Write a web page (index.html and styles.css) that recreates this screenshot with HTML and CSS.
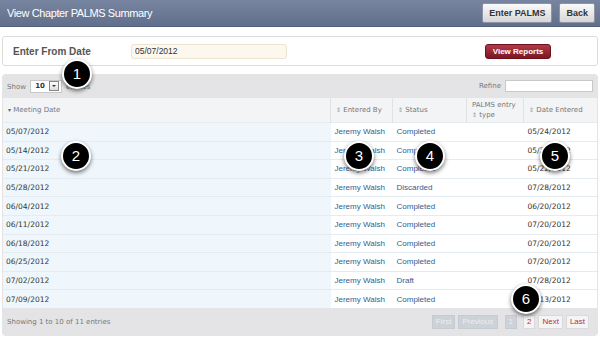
FILE: index.html
```html
<!DOCTYPE html>
<html lang="en">
<head>
    <meta charset="UTF-8">
    <title>View Chapter PALMS Summary</title>
    <link rel="stylesheet" href="styles.css">
</head>
<body>
    <div class="topbar">
        <h1>View Chapter PALMS Summary</h1>
        <div class="top-actions">
            <button class="btn">Enter PALMS</button>
            <button class="btn">Back</button>
        </div>
    </div>

    <div class="page">
        <div class="filter">
            <label class="filter-label">Enter From Date</label>
            <input type="text" class="date-input" value="05/07/2012">
            <button class="btn-red">View Reports</button>
        </div>

        <div class="grid">
            <div class="grid-top">
                <div class="show">Show <span class="select">10 <span class="select-arrow"></span></span> entries</div>
                <div class="refine">Refine <input type="text" class="refine-input"></div>
            </div>
            <table>
                <thead>
                    <tr>
                        <th class="c1"><span class="down">&#9662;</span> Meeting Date</th>
                        <th class="c2"><span class="sort">&#8661;</span> Entered By</th>
                        <th class="c3"><span class="sort">&#8661;</span> Status</th>
                        <th class="c4">PALMS entry<br><span class="sort">&#8661;</span> type</th>
                        <th class="c5"><span class="sort">&#8661;</span> Date Entered</th>
                    </tr>
                </thead>
                <tbody>
                    <tr><td class="c1">05/07/2012</td><td class="link">Jeremy Walsh</td><td class="link">Completed</td><td></td><td>05/24/2012</td></tr>
                    <tr><td class="c1">05/14/2012</td><td class="link">Jeremy Walsh</td><td class="link">Completed</td><td></td><td>05/24/2012</td></tr>
                    <tr><td class="c1">05/21/2012</td><td class="link">Jeremy Walsh</td><td class="link">Completed</td><td></td><td>05/22/2012</td></tr>
                    <tr><td class="c1">05/28/2012</td><td class="link">Jeremy Walsh</td><td class="link">Discarded</td><td></td><td>07/28/2012</td></tr>
                    <tr><td class="c1">06/04/2012</td><td class="link">Jeremy Walsh</td><td class="link">Completed</td><td></td><td>06/20/2012</td></tr>
                    <tr><td class="c1">06/11/2012</td><td class="link">Jeremy Walsh</td><td class="link">Completed</td><td></td><td>07/20/2012</td></tr>
                    <tr><td class="c1">06/18/2012</td><td class="link">Jeremy Walsh</td><td class="link">Completed</td><td></td><td>07/20/2012</td></tr>
                    <tr><td class="c1">06/25/2012</td><td class="link">Jeremy Walsh</td><td class="link">Completed</td><td></td><td>07/20/2012</td></tr>
                    <tr><td class="c1">07/02/2012</td><td class="link">Jeremy Walsh</td><td class="link">Draft</td><td></td><td>07/28/2012</td></tr>
                    <tr><td class="c1">07/09/2012</td><td class="link">Jeremy Walsh</td><td class="link">Completed</td><td></td><td>07/13/2012</td></tr>
                </tbody>
            </table>
            <div class="grid-bottom">
                <div class="info">Showing 1 to 10 of 11 entries</div>
                <div class="pager">
                    <span class="pg off">First</span>
                    <span class="pg off">Previous</span>
                    <span class="pg cur">1</span>
                    <span class="pg">2</span>
                    <span class="pg">Next</span>
                    <span class="pg">Last</span>
                </div>
            </div>
        </div>
    </div>

    <span class="badge" style="left:62px; top:59px;">1</span>
    <span class="badge" style="left:61px; top:141px;">2</span>
    <span class="badge" style="left:344px; top:141px;">3</span>
    <span class="badge" style="left:415px; top:141px;">4</span>
    <span class="badge" style="left:540px; top:141px;">5</span>
    <span class="badge" style="left:511px; top:284px;">6</span>
</body>
</html>
```

FILE: styles.css
```css
body { margin: 0; background: #fff; font-family: "Liberation Sans", Arial, sans-serif; width: 600px; height: 338px; overflow: hidden; position: relative; }

.topbar { height: 26px; display: flex; align-items: center; justify-content: space-between; padding: 0 5px 0 7px; background: linear-gradient(#7885a0, #606f8c); border-bottom: 1px solid #55627c; }
.topbar h1 { margin: 0; font-size: 11px; font-weight: normal; color: #fff; letter-spacing: -0.4px; }
.top-actions { display: flex; gap: 7px; }
.btn { height: 20px; padding: 0 6px; font-family: "Liberation Sans", Arial, sans-serif; font-size: 9px; font-weight: bold; color: #333; background: linear-gradient(#fafafa, #d6d6d6); border: 1px solid #8d95a5; border-radius: 2px; }

.page { padding: 0 2px; }
.filter { margin-top: 9px; height: 28px; border: 1px solid #dcdcdc; border-radius: 3px; display: flex; align-items: center; padding: 0 0 0 10px; }
.filter-label { width: 118px; font-size: 10px; font-weight: bold; color: #555; }
.date-input { width: 148px; height: 13px; padding: 0 3px; font-family: "Liberation Sans", Arial, sans-serif; font-size: 8.5px; color: #333; background: #fcf8ee; border: 1px solid #ece3d0; border-radius: 3px; }
.btn-red { margin-left: 198px; width: 66px; height: 15px; padding: 0; font-family: "Liberation Sans", Arial, sans-serif; font-size: 8px; font-weight: bold; color: #fff; background: linear-gradient(#b23a48, #7c1723); border: 1px solid #6c1019; border-radius: 3px; }

.grid { margin-top: 8px; background: #e4e4e7; border-radius: 4px; padding: 0 1px; }
.grid-top { height: 24px; display: flex; align-items: center; justify-content: space-between; padding: 0 4px 0 4px; font-family: "DejaVu Sans", Verdana, sans-serif; font-size: 7px; color: #777; }
.select { display: inline-flex; align-items: center; gap: 4px; height: 11px; padding: 0 2px 0 4px; margin: 0 2px; background: #fff; border: 1px solid #c8c8c8; color: #333; font-weight: bold; }
.select-arrow { width: 8px; height: 8px; border: 1px solid #888; background: linear-gradient(#fff, #ddd); position: relative; }
.select-arrow::after { content: ""; position: absolute; left: 2px; top: 3px; border-left: 2px solid transparent; border-right: 2px solid transparent; border-top: 2px solid #333; }
.refine { display: flex; align-items: center; gap: 4px; }
.refine-input { width: 86px; height: 10px; border: 1px solid #c8c8c8; padding: 0; }

table { width: 100%; border-collapse: collapse; table-layout: fixed; }
th { height: 24px; padding: 0 5px; text-align: left; font-family: "DejaVu Sans", Verdana, sans-serif; font-size: 7px; font-weight: normal; color: #777; background: #f3f4f6; border-left: 1px solid #e2e2e4; line-height: 9px; }
th.c1 { width: 317px; border-left: none; }
th.c2 { width: 51px; }
th.c3 { width: 63px; }
th.c4 { width: 46px; }
.sort { font-size: 6px; color: #999; }
.down { font-size: 6px; color: #666; }
td { height: 17.6px; padding: 0 4px; font-family: "DejaVu Sans", Verdana, sans-serif; font-size: 7.5px; color: #333; background: #fff; border-top: 1px solid #e4ecf2; white-space: nowrap; }
td.c1 { background: #eff7fd; padding-left: 3px; }
td.link { font-family: "Liberation Sans", Arial, sans-serif; font-size: 8px; color: #2d6193; }

.grid-bottom { height: 28px; display: flex; align-items: center; justify-content: space-between; padding: 0 8px 0 4px; font-family: "DejaVu Sans", Verdana, sans-serif; font-size: 7px; color: #777; }
.pager { display: flex; gap: 3px; font-family: "Liberation Sans", Arial, sans-serif; }
.pg { height: 12px; line-height: 12px; padding: 0 3px; font-size: 8px; color: #b8303e; background: #f4f4f5; border: 1px solid #dadadc; }
.pg.off { color: #eceef2; background: #cdd1d8; border-color: #c6cad1; }
.pg.cur { margin: 0 3px 0 4px; color: #eceef2; background: #cdd1d8; border-color: #c6cad1; }

.badge { position: absolute; width: 26px; height: 26px; border-radius: 50%; background: #000; border: 2px solid #fff; box-shadow: 0 2px 4px rgba(0,0,0,0.55); color: #fff; font-family: "Liberation Sans", Arial, sans-serif; font-size: 15px; line-height: 26px; text-align: center; }
```
